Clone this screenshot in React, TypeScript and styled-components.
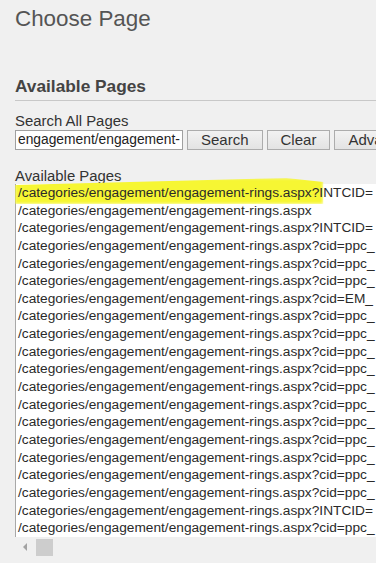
import React from 'react';
import styled, { createGlobalStyle } from 'styled-components';

const GlobalStyle = createGlobalStyle`
  html, body {
    margin: 0;
    padding: 0;
    background: #f0f0f0;
    overflow: hidden;
  }
  body {
    font-family: "Liberation Sans", Arial, sans-serif;
    color: #333;
  }
`;

const Page = styled.div`
  width: 376px;
  height: 563px;
  overflow: hidden;
  padding: 6px 0 0 15px;
  box-sizing: border-box;
`;

const Title = styled.h1`
  margin: 0;
  font-size: 22.4px;
  line-height: 26px;
  font-weight: normal;
  color: #555;
`;

const SectionHeading = styled.h2`
  margin: 44px 0 0 0;
  padding: 0 0 4px 0;
  font-size: 17.3px;
  line-height: 20px;
  font-weight: bold;
  color: #444;
  border-bottom: 1px solid #c8c8c8;
`;

const Label = styled.div<{ $top: number }>`
  margin-top: ${(p) => p.$top}px;
  font-size: 14.9px;
  line-height: 16.5px;
  color: #333;
  white-space: nowrap;
`;

const SearchBar = styled.div`
  display: flex;
  gap: 4px;
  white-space: nowrap;
`;

const SearchInput = styled.div`
  flex: none;
  width: 164px;
  height: 18px;
  border: 1px solid #a0a0a0;
  background: #fff;
  font-size: 13.8px;
  line-height: 18px;
  padding-left: 2px;
  overflow: hidden;
  color: #222;
`;

const Button = styled.button`
  flex: none;
  height: 20px;
  margin: 0;
  padding: 0 13px;
  border: 1px solid #acacac;
  border-radius: 0;
  background: linear-gradient(#f2f2f2, #e3e3e3);
  font-family: "Liberation Sans", Arial, sans-serif;
  font-size: 15px;
  line-height: 18px;
  color: #333;
`;

// the page itself clips the long rows on the right, so the list leaves
// overflow visible and the marker may spill over its top edge
const List = styled.div`
  background: #fff;
  border-left: 1px solid #a8a8a8;
  padding-left: 2px;
`;

const Row = styled.div`
  position: relative;
  z-index: 0;
  height: 17.65px;
  line-height: 17.65px;
  font-size: 13.7px;
  white-space: nowrap;
  color: #2a2a2a;
`;

const Marker = styled.span`
  position: relative;
  &::before {
    content: '';
    position: absolute;
    z-index: -1;
    left: -3px;
    right: -4px;
    top: -7px;
    bottom: -4px;
    background: #f6f633;
    clip-path: polygon(0 7px, 88% 0, 100% 4px, 100% 100%, 0 100%);
    filter: blur(1.4px);
  }
`;

const Scrollbar = styled.div`
  display: flex;
  align-items: center;
  height: 21px;
  padding-left: 8px;
  gap: 9px;
`;

const Arrow = styled.div`
  width: 0;
  height: 0;
  border-top: 4px solid transparent;
  border-bottom: 4px solid transparent;
  border-right: 4px solid #a3a3a3;
`;

const Thumb = styled.div`
  width: 17px;
  height: 17px;
  background: #cdcdcd;
`;

const base = '/categories/engagement/engagement-rings.aspx';

const suffixes = [
  '?INTCID=',
  '',
  '?INTCID=',
  '?cid=ppc_',
  '?cid=ppc_',
  '?cid=ppc_',
  '?cid=EM_',
  '?cid=ppc_',
  '?cid=ppc_',
  '?cid=ppc_',
  '?cid=ppc_',
  '?cid=ppc_',
  '?cid=ppc_',
  '?cid=ppc_',
  '?cid=ppc_',
  '?cid=ppc_',
  '?cid=ppc_',
  '?cid=ppc_',
  '?INTCID=',
  '?cid=ppc_',
];

const App = () => {
  return (
    <Page>
      <GlobalStyle />
      <Title>Choose Page</Title>
      <SectionHeading>Available Pages</SectionHeading>
      <Label $top={12}>Search All Pages</Label>
      <SearchBar>
        <SearchInput>engagement/engagement-</SearchInput>
        <Button>Search</Button>
        <Button>Clear</Button>
        <Button>Advanced Search</Button>
      </SearchBar>
      <Label $top={18}>Available Pages</Label>
      <List>
        {suffixes.map((s, i) =>
          i === 0 ? (
            <Row key={i}>
              <Marker>{base}?</Marker>INTCID=
            </Row>
          ) : (
            <Row key={i}>
              {base}
              {s}
            </Row>
          )
        )}
      </List>
      <Scrollbar>
        <Arrow />
        <Thumb />
      </Scrollbar>
    </Page>
  );
};

export default App;
